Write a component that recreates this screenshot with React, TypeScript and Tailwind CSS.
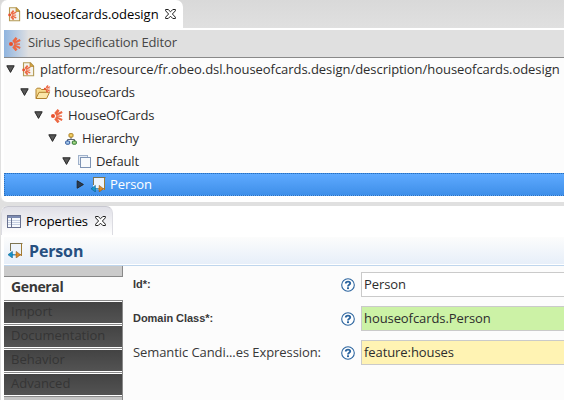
import React from "react";

function Rays({ x = 0, y = 0, s = 1 }: { x?: number; y?: number; s?: number }) {
  return (
    <g transform={`translate(${x} ${y}) scale(${s})`} stroke="#ec6843" strokeLinecap="butt" fill="none">
      <circle cx="2" cy="7" r="2" fill="#e8502c" stroke="none" />
      <path d="M4.2 4.9 L7.6 0.8" strokeWidth="2.6" />
      <path d="M4.8 6 L11.2 3" strokeWidth="2" />
      <path d="M5.2 7.1 H11" strokeWidth="1.4" />
      <path d="M4.8 8.2 L11.2 11" strokeWidth="2" />
      <path d="M4.2 9.3 L7.6 13.4" strokeWidth="2.6" />
    </g>
  );
}

function FileIcon() {
  return (
    <svg width="13" height="15" viewBox="0 0 13 15" className="shrink-0">
      <path d="M1.5 .8 H8.5 L11.6 4.2 V13.8 H1.5 Z" fill="#f5f4ee" stroke="#b49a55" strokeWidth="1.1" />
      <path d="M8 .7 V4.5 H12 Z" fill="#d9a83c" stroke="#ac8238" strokeWidth=".7" />
      <Rays x={0.2} y={3} s={0.72} />
    </svg>
  );
}

function FolderIcon() {
  return (
    <svg width="17" height="15" viewBox="0 0 17 15" className="shrink-0">
      <path d="M1 13.4 V4.3 L2.1 3.2 H5.3 L6.5 4.5 H11.6 V7" fill="#f7dc91" stroke="#b1812e" />
      <path d="M1 13.5 L4 7.3 H14.5 L11.6 13.5 Z" fill="#fbe6a8" stroke="#b1812e" />
      <Rays x={8.8} y={0} s={0.56} />
    </svg>
  );
}

function SiriusIcon() {
  return (
    <svg width="12" height="14" viewBox="0 0 12 14" className="shrink-0">
      <Rays />
    </svg>
  );
}

function HierarchyIcon() {
  return (
    <svg width="12" height="12" viewBox="0 0 12 12" className="shrink-0">
      <path d="M6 4 V6.4 M2.5 8.5 V6.5 H9.5 V8.5" fill="none" stroke="#5b6270" />
      <rect x="4" y=".7" width="4" height="3.4" rx=".8" fill="#f4d36a" stroke="#a87a18" />
      <rect x=".7" y="8" width="4" height="3.2" rx=".8" fill="#a9ccec" stroke="#28519a" />
      <rect x="7.3" y="8" width="4" height="3.2" rx=".8" fill="#a8d984" stroke="#28732f" />
    </svg>
  );
}

function LayersIcon() {
  return (
    <svg width="13" height="13" viewBox="0 0 13 13" className="shrink-0">
      <rect x=".5" y=".5" width="9" height="9" fill="#e6ecf5" stroke="#9fb1ca" />
      <rect x="2.5" y="2.5" width="10" height="10" fill="#f8fafc" stroke="#7f94b4" />
    </svg>
  );
}

function NodeIcon() {
  return (
    <svg width="15" height="15" viewBox="0 0 15 15" className="shrink-0">
      <rect x="2" y=".5" width="12" height="12" fill="#eef4fb" />
      <path d="M2.5 8 V.5 M2 .5 H14.5" fill="none" stroke="#7d7452" />
      <path d="M13.5 .5 V13" fill="none" stroke="#a07c34" />
      <path d="M3 11.8 H7" stroke="#1889c0" strokeWidth="1.3" />
      <path d="M7 11.8 H13.5" stroke="#b87a2c" strokeWidth="1.3" />
      <path d="M4.4 8.4 V15 L0 11.7 Z" fill="#1496cc" stroke="#12628f" strokeWidth=".6" />
      <path d="M8.2 8.4 V15 L12.4 11.7 Z" fill="#e08a24" stroke="#8c5a1c" strokeWidth=".6" />
    </svg>
  );
}

function TableIcon() {
  return (
    <svg width="14" height="13" viewBox="0 0 14 13" className="shrink-0">
      <rect x=".5" y=".5" width="13" height="12" fill="#f6f9fd" stroke="#68718f" />
      <rect x="1" y="1" width="12" height="2" fill="#7c8bb2" />
      <path d="M1 5.5 H13 M1 7.5 H13 M1 9.5 H13" stroke="#c5cfe2" />
      <path d="M4.5 3 V12" stroke="#68718f" />
    </svg>
  );
}

function CloseIcon() {
  return (
    <svg width="11" height="10" viewBox="0 0 11 10" className="shrink-0">
      <path d="M.6 .5 H3.2 L5.5 2.8 L7.8 .5 H10.4 V1.8 L7.4 5 L10.4 8.2 V9.5 H7.8 L5.5 7.2 L3.2 9.5 H.6 V8.2 L3.6 5 L.6 1.8 Z" fill="#fff" stroke="#202020" strokeWidth="1" />
    </svg>
  );
}

function Arrow({ open }: { open: boolean }) {
  return (
    <svg width="9" height="9" viewBox="0 0 9 9" className="shrink-0">
      <path d={open ? "M.8 .8 H8.2 L4.5 7.4 Z" : "M1.2 .8 V8.2 L7.4 4.5 Z"} fill={open ? "#585858" : "#243c58"} stroke="#262626" />
    </svg>
  );
}

function HelpIcon() {
  return (
    <svg width="14" height="14" viewBox="0 0 14 14" className="shrink-0">
      <circle cx="7" cy="7" r="6.3" fill="#fff" stroke="#2c659f" strokeWidth="1.1" />
      <path d="M4.8 5.4 C4.8 3.1 9.3 3.1 9.2 5.3 C9.2 6.8 7 6.7 7 8.5" fill="none" stroke="#2c659f" strokeWidth="1.9" />
      <rect x="6" y="9.3" width="2" height="1.8" fill="#2c659f" />
    </svg>
  );
}

const rows = [
  { label: "platform:/resource/fr.obeo.dsl.houseofcards.design/description/houseofcards.odesign", pad: "pl-[2px]", iconPad: "pl-px", track: "tracking-[-0.048px]", icon: <FileIcon /> },
  { label: "houseofcards", pad: "pl-[16px]", iconPad: "pl-0", track: "tracking-[-0.12px]", icon: <FolderIcon /> },
  { label: "HouseOfCards", pad: "pl-[30px]", iconPad: "pl-[2px]", track: "tracking-[-0.16px]", icon: <SiriusIcon /> },
  { label: "Hierarchy", pad: "pl-[44px]", iconPad: "pl-[2px]", track: "tracking-[-0.2px]", icon: <HierarchyIcon /> },
  { label: "Default", pad: "pl-[58px]", iconPad: "pl-px", track: "tracking-[-0.2px]", icon: <LayersIcon /> },
];

const fields = [
  { label: "Id*:", value: "Person", bold: true, bg: "bg-white" },
  { label: "Domain Class*:", value: "houseofcards.Person", bold: true, bg: "bg-[#ccf2a6]" },
  { label: "Semantic Candi...es Expression:", value: "feature:houses", bold: false, bg: "bg-[#fff3b3]" },
];

export default function App() {
  return (
    <div className="flex h-[400px] w-[564px] flex-col overflow-hidden bg-[#e0e0e0] font-['Open_Sans','Noto_Sans',sans-serif] text-[13px] whitespace-nowrap text-[#2d2d2d]">
      <section className="flex h-[202px] shrink-0 flex-col rounded-bl-[7px] bg-white">
        <div className="flex h-7 shrink-0 bg-linear-to-b from-[#d9d9d9] to-[#e0e0e0]">
          <div className="flex w-[183px] items-center rounded-t-[7px] border-l border-[#e0e0e0] bg-white pl-[7px] text-black">
            <FileIcon />
            <span className="ml-[5px] w-[139px] pt-px tracking-[-0.04px]">houseofcards.odesign</span>
            <CloseIcon />
          </div>
        </div>
        <div className="flex grow flex-col rounded-bl-[7px] border-l border-[#e0e0e0] pt-[2px] pl-[3px]">
          <div className="flex h-7 shrink-0 items-center border-b border-[#898989] bg-[#e0e0e0] text-[#464646]">
            <div className="flex h-[27px] w-6 items-center bg-linear-to-r from-[#8fb4df] to-[#dedfe1] pl-[5px]"><SiriusIcon /></div>
            <span className="pb-[2px] tracking-[-0.15px]">Sirius Specification Editor</span>
          </div>
          <div className="bg-[#fcfcfc]">
            {rows.map((r) => (
              <div key={r.label} className={`flex h-[23px] items-center ${r.pad}`}>
                <Arrow open />
                <div className={`ml-[6px] flex w-[19px] items-center ${r.iconPad}`}>{r.icon}</div>
                <span className={r.track}>{r.label}</span>
              </div>
            ))}
            <div className="flex h-[23px] items-center border-y border-l border-dotted border-[#2c70bc] bg-linear-to-b from-[#5eaaff] to-[#3e8fe9] pl-[71px] text-white">
              <Arrow open={false} />
              <div className="ml-[5px] flex w-5 items-center pl-px"><NodeIcon /></div>
              <span className="tracking-[-0.1px]">Person</span>
            </div>
          </div>
        </div>
      </section>
      <section className="mt-1 flex h-[194px] shrink-0 flex-col rounded-tl-[7px] border-l border-[#e0e0e0] bg-white">
        <div className="flex h-[31px] shrink-0">
          <div className="flex h-[29px] w-[112px] items-center rounded-t-[7px] border-x border-t border-x-[#dcdce2] border-t-[#c8c8d0] bg-linear-to-b from-[#e0e0e7] to-white pl-[5px] text-black">
            <TableIcon />
            <span className="ml-[5px] w-[69px] pt-px tracking-[-0.1px]">Properties</span>
            <CloseIcon />
          </div>
        </div>
        <div className="ml-[3px] flex h-[27px] shrink-0 items-center bg-linear-to-b from-[#fcfcfc] to-[#e7eff9] pl-1">
          <NodeIcon />
          <span className="ml-[6px] text-[16px] font-bold tracking-[-0.15px] text-[#264f80]">Person</span>
        </div>
        <div className="ml-[3px] flex h-[136px] shrink-0 pt-px">
          <div className="flex grow border-t border-[#bfd6ed] bg-[#fcfcfc]">
            <nav className="flex w-[119px] flex-col">
              <div className="h-[11px] shrink-0 border-r border-b border-[#898989] bg-[#cbcbcb]" />
              <div className="flex h-[23px] shrink-0 items-center pb-1 pl-[7px] text-[14px] font-bold tracking-[-0.38px] text-[#383838]">General</div>
              {["Import", "Documentation", "Behavior", "Advanced"].map((name) => (
                <div key={name} className="h-6 shrink-0 border-t border-r border-[#898989] bg-white py-px">
                  <div className="flex h-[21px] items-center bg-linear-to-b from-[#434343] to-[#535353] pb-[2px] pl-[7px] text-[#353535]">{name}</div>
                </div>
              ))}
              <div className="h-1 border-t border-r border-[#898989] bg-[#c4c4c4]" />
            </nav>
            <div className="flex grow flex-col gap-[9px] pt-[6px] pl-[10px]">
              {fields.map((f) => (
                <div key={f.label} className="flex h-[25px] shrink-0 items-center">
                  <span className={f.bold ? "w-[208px] font-['Liberation_Sans',sans-serif] text-[11px] font-bold tracking-[-0.04px] text-[#383838]" : "w-[208px] tracking-[-0.08px] text-[#383838]"}>{f.label}</span>
                  <HelpIcon />
                  <div className={`ml-[6px] flex h-[25px] grow items-center border-y border-l border-[#cacaca] pl-[2px] tracking-[-0.08px] ${f.bg}`}>{f.value}</div>
                </div>
              ))}
            </div>
          </div>
        </div>
      </section>
    </div>
  );
}
